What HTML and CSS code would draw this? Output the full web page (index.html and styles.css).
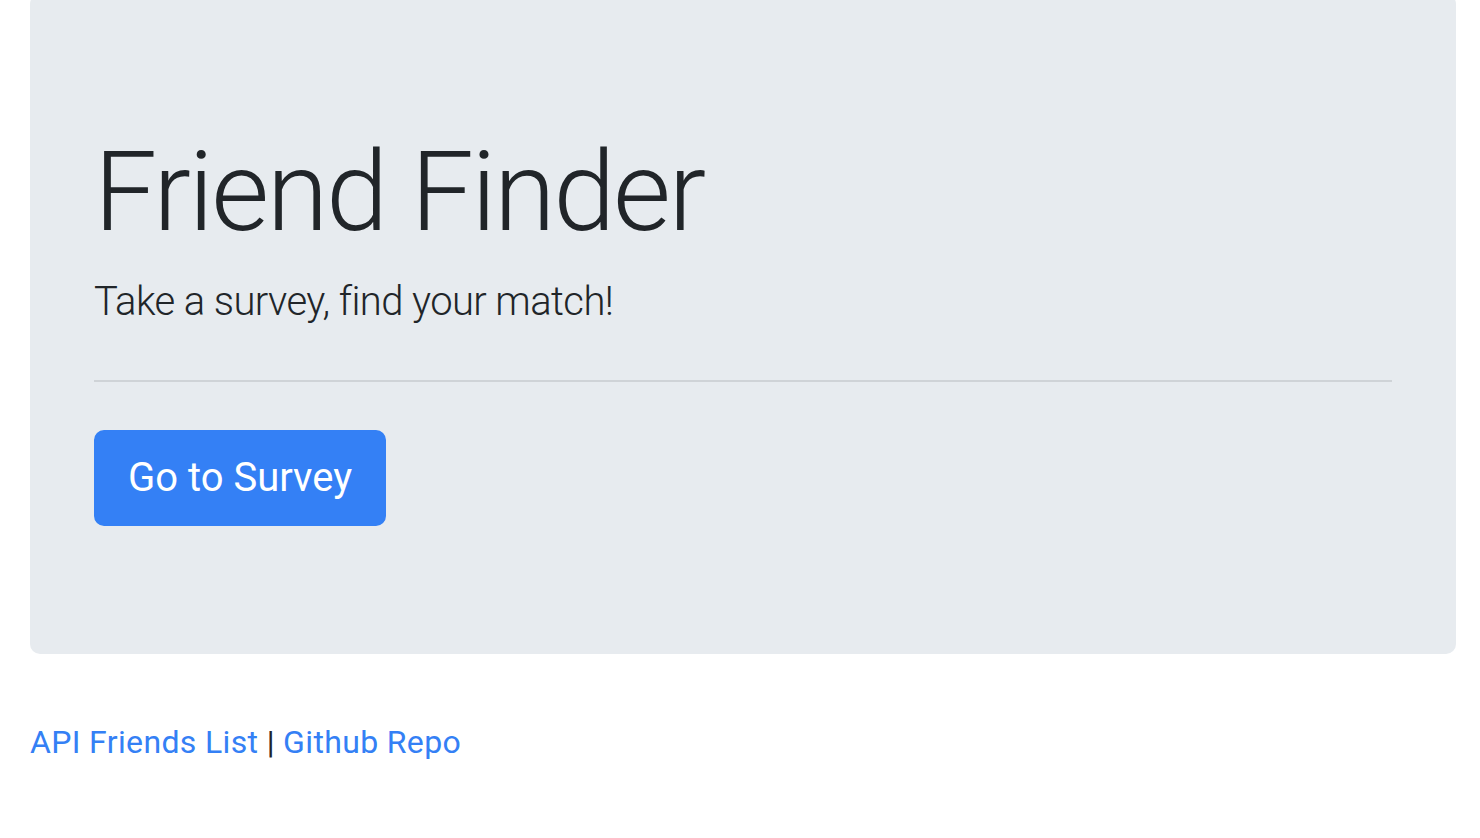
FILE: index.html
```html
<!DOCTYPE html>
<html lang="en">
<head>
<meta charset="utf-8">
<title>Friend Finder</title>
<link rel="stylesheet" href="styles.css">
</head>
<body>
<div class="page">
  <div class="jumbotron">
    <h1 class="title">Friend Finder</h1>
    <p class="lead">Take a survey, find your match!</p>
    <hr class="divider">
    <a class="btn" href="#">Go to Survey</a>
  </div>
  <p class="footer"><a href="#">API Friends List</a> | <a href="#">Github Repo</a></p>
</div>
</body>
</html>
```

FILE: styles.css
```css
* { box-sizing: border-box; }
html, body { margin: 0; padding: 0; background: #fff; }
body {
  font-family: Roboto, "Liberation Sans", sans-serif;
  color: #212529;
  font-size: 32px;
  line-height: 1.5;
}
.page {
  padding: 0 24px 0 30px;
}
.jumbotron {
  margin-top: -6px;
  background: #e7ebef;
  border-radius: 10px;
  padding: 128px 64px;
  margin-bottom: 64px;
}
.title {
  margin: 3px 0 13px;
  font-size: 112px;
  font-weight: 300;
  line-height: 1.2;
  letter-spacing: -2.4px;
}
.lead {
  margin: 0;
  font-size: 40px;
  font-weight: 300;
  line-height: 1.5;
  letter-spacing: -0.6px;
}
.divider {
  margin: 48px 0;
  border: 0;
  border-top: 2px solid #cfd3d7;
}
.btn {
  display: inline-block;
  background: #3480f5;
  color: #fff;
  text-decoration: none;
  font-size: 40px;
  line-height: 60px;
  padding: 16px 32px;
  border: 2px solid #3480f5;
  border-radius: 10px;
}
.footer {
  margin: 0;
  letter-spacing: 0.35px;
}
.footer a {
  color: #3480f5;
  text-decoration: none;
}
```
